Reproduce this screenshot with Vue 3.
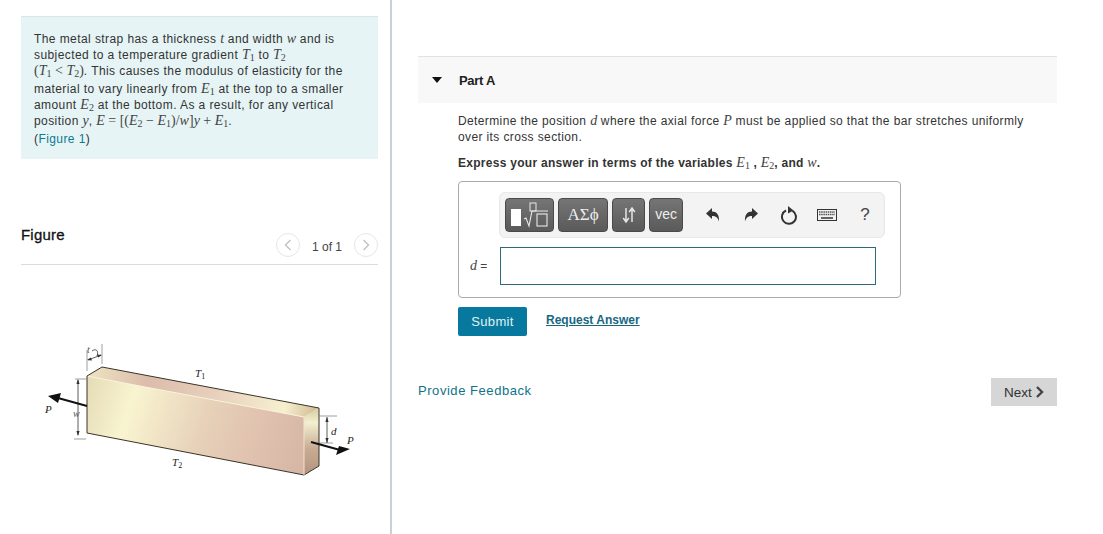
<script setup>
const toolIcons = ['undo', 'redo', 'reset', 'keyboard', 'help']
</script>

<template>
  <div class="page">
    <aside class="left">
      <section class="intro">
        <div class="ln l1">The metal strap has a thickness <i class="m">t</i> and width <i class="m">w</i> and is</div>
        <div class="ln l1">subjected to a temperature gradient <i class="m">T<sub>1</sub></i> to <i class="m">T<sub>2</sub></i></div>
        <div class="ln l2"><span class="m up">(<i>T<sub>1</sub></i> &lt; <i>T<sub>2</sub></i>)</span>. This causes the modulus of elasticity for the</div>
        <div class="ln l1">material to vary linearly from <i class="m">E<sub>1</sub></i> at the top to a smaller</div>
        <div class="ln l1">amount <i class="m">E<sub>2</sub></i> at the bottom. As a result, for any vertical</div>
        <div class="ln l2">position <i class="m">y</i>, <span class="m"><i>E</i> = [(<i>E<sub>2</sub></i> − <i>E<sub>1</sub></i>)/<i>w</i>]<i>y</i> + <i>E<sub>1</sub></i></span>.</div>
        <div class="ln"><span>(</span><a class="link">Figure 1</a><span>)</span></div>
      </section>

      <header class="fig-head">
        <h2>Figure</h2>
        <div class="pager">
          <span class="circle">
            <svg width="8" height="12" viewBox="0 0 8 12"><path d="M6.5 1 1.5 6l5 5" fill="none" stroke="#c4c4c4" stroke-width="1.5"/></svg>
          </span>
          <span class="count">1 of 1</span>
          <span class="circle">
            <svg width="8" height="12" viewBox="0 0 8 12"><path d="M1.5 1l5 5-5 5" fill="none" stroke="#c4c4c4" stroke-width="1.5"/></svg>
          </span>
        </div>
      </header>

      <svg class="figure" viewBox="21 266 357 230" width="357" height="230">
        <defs>
          <linearGradient id="front" gradientUnits="userSpaceOnUse" x1="87" y1="390" x2="304" y2="460">
            <stop offset="0" stop-color="#e6dcb8"/>
            <stop offset=".2" stop-color="#f9f4d0"/>
            <stop offset=".55" stop-color="#e6d0b8"/>
            <stop offset=".8" stop-color="#dfc0ae"/>
            <stop offset="1" stop-color="#d6b6a4"/>
          </linearGradient>
          <linearGradient id="top" gradientUnits="userSpaceOnUse" x1="90" y1="372" x2="319" y2="414">
            <stop offset="0" stop-color="#ece2c0"/>
            <stop offset=".25" stop-color="#dcbcab"/>
            <stop offset=".55" stop-color="#e8d0bd"/>
            <stop offset=".85" stop-color="#f6f0cf"/>
            <stop offset="1" stop-color="#cdb78f"/>
          </linearGradient>
          <linearGradient id="side" x1="0" y1="0" x2="0" y2="1">
            <stop offset="0" stop-color="#d8cc9e"/>
            <stop offset=".22" stop-color="#f3efd0"/>
            <stop offset=".6" stop-color="#c9ac94"/>
            <stop offset="1" stop-color="#b4937e"/>
          </linearGradient>
        </defs>
        <path d="M87 377 102 368 319 409 304 418Z" fill="url(#top)"/>
        <path d="M87 377 304 418V476L87 434Z" fill="url(#front)"/>
        <path d="M304 418 319 409V467L304 476Z" fill="url(#side)"/>
        <path d="M87 377 304 418" stroke="#f7f2dc" stroke-width="1" fill="none"/>
        <path d="M87 377 102 368 319 409V467L304 476 87 434Z" fill="none" stroke="#3a3328" stroke-width="1"/>
        <path d="M304 418V476" stroke="#eee4cc" stroke-width="1"/>

        <g fill="none" stroke="#777" stroke-width=".7">
          <path d="M87 372V351M102 365V345M75 380H86M74 440H86M319 417H337M318 444H333"/>
        </g>
        <g fill="none" stroke="#333" stroke-width=".8">
          <path d="M78 381V436M88 361 101 356M327 418V444M92 352C96 349 99 352 97 357"/>
        </g>
        <path d="M78 380l-1.6 5h3.2ZM78 437l-1.6-5h3.2ZM327 418l-1.6 5h3.2ZM327 444l-1.6-5h3.2ZM87 361l5 .5-1.2-3ZM102 356l-5-.5 1.2 3Z" fill="#333"/>

        <path d="M87 407 58 399" stroke="#111" stroke-width="2"/>
        <path d="M48 397 61 394 58 404Z" fill="#111"/>
        <path d="M311 443 340 451" stroke="#111" stroke-width="2"/>
        <path d="M350 450 336 456 339 447Z" fill="#111"/>

        <g class="lab">
          <text x="45" y="414">P</text>
          <text x="73" y="418" class="sm">w</text>
          <text x="347" y="445">P</text>
          <text x="331" y="436">d</text>
          <text x="87" y="354" class="sm">t</text>
          <text x="195" y="378">T<tspan class="sb" dy="2">1</tspan></text>
          <text x="172" y="467">T<tspan class="sb" dy="2">2</tspan></text>
        </g>
      </svg>
    </aside>

    <main class="right">
      <div class="part-head">
        <span class="tri"></span>
        <span class="part-title">Part A</span>
      </div>

      <div class="part-body">
        <p class="q">Determine the position <i class="m">d</i> where the axial force <i class="m">P</i> must be applied so that the bar stretches uniformly<br>over its cross section.</p>
        <p class="instr">Express your answer in terms of the variables <span class="m mn"><i>E<sub>1</sub></i></span> , <span class="m mn"><i>E<sub>2</sub></i></span>, and <i class="m mn">w</i>.</p>

        <div class="answer">
          <div class="toolbar">
            <button class="tb b1">
              <svg width="42" height="28" viewBox="0 0 42 28">
                <rect x="2" y="8" width="10" height="17" fill="#fff"/>
                <rect x="21" y="2" width="6" height="8" fill="none" stroke="#e8e8e8"/>
                <path d="M15 18l2-1 3 8 3-15h16" fill="none" stroke="#e8e8e8" stroke-width="1.1"/>
                <rect x="28" y="13" width="10" height="12" fill="none" stroke="#e8e8e8" stroke-width="1.1"/>
              </svg>
            </button>
            <button class="tb b2">ΑΣϕ</button>
            <button class="tb b3">
              <svg width="14" height="16" viewBox="0 0 14 16">
                <path d="M4 1V14M1.2 11 4 15 6.8 11" fill="none" stroke="#e6e6e6" stroke-width="1.5"/>
                <path d="M10 15V2M7.2 5 10 1 12.8 5" fill="none" stroke="#e6e6e6" stroke-width="1.5"/>
              </svg>
            </button>
            <button class="tb b4">vec</button>
            <div class="tools">
              <span v-for="t in toolIcons" :key="t" class="tool">
                <svg v-if="t === 'undo'" width="14" height="14" viewBox="0 0 14 14">
                  <path d="M0 5.5 6 0V3.4C10.5 3.4 13.5 6.4 13 13.5 11.8 9.5 10 8 6 8V11Z" fill="#333"/>
                </svg>
                <svg v-else-if="t === 'redo'" width="14" height="14" viewBox="0 0 14 14">
                  <path d="M14 5.5 8 0V3.4C3.500 3.4 .5 6.4 1 13.500 2.200 9.500 4 8 8 8V11Z" fill="#333"/>
                </svg>
                <svg v-else-if="t === 'reset'" width="18" height="20" viewBox="0 0 18 20">
                  <path d="M6 5.500A7 7 0 1 0 12.500 5.800" fill="none" stroke="#333" stroke-width="2"/>
                  <path d="M8 1 13.500 5.500 8 8.500Z" fill="#333"/>
                </svg>
                <svg v-else-if="t === 'keyboard'" width="20" height="12" viewBox="0 0 20 12">
                  <rect x=".5" y=".5" width="19" height="11" fill="#f2f2f2" stroke="#333"/>
                  <path d="M2 3h16M2 5.500h16" stroke="#555" stroke-width="1.300" stroke-dasharray="1.500 .7"/>
                  <path d="M4 9h12" stroke="#333" stroke-width="1.500"/>
                </svg>
                <span v-else class="help">?</span>
              </span>
            </div>
          </div>
          <div class="input-row">
            <label class="eq"><i class="m">d</i> =</label>
            <div class="input"></div>
          </div>
        </div>

        <div class="actions">
          <button class="submit">Submit</button>
          <a class="request">Request Answer</a>
        </div>
      </div>

      <div class="footer">
        <a class="feedback">Provide Feedback</a>
        <button class="next">Next
          <svg width="9" height="12" viewBox="0 0 9 12"><path d="M2 1l5 5-5 5" fill="none" stroke="#444" stroke-width="2.400"/></svg>
        </button>
      </div>
    </main>
  </div>
</template>

<style>
html, body { margin: 0; background: #fff; }
</style>

<style scoped>
.page {
  display: flex;
  width: 1103px;
  height: 534px;
  overflow: hidden;
  font-family: "Liberation Sans", Arial, sans-serif;
  font-size: 12px;
  color: #333;
}
.left {
  width: 390px;
  height: 534px;
  flex: none;
  box-sizing: content-box;
  border-right: 2px solid #c9d0d8;
  padding: 16px 0 0 21px;
  margin-top: 0;
  box-sizing: border-box;
  width: 392px;
}
.intro {
  width: 357px;
  height: 143px;
  box-sizing: border-box;
  background: #e6f4f6;
  border-top: 1px solid #d8e6e8;
  padding: 14px 0 0 13px;
  letter-spacing: .42px;
}
.ln { height: 16px; line-height: 16px; white-space: nowrap; }
.l2 { height: 18px; }
.m {
  font-family: "Liberation Serif", serif;
  font-size: 14px;
  letter-spacing: 0;
  color: #444;
}
sub { font-size: 10px; line-height: 0; font-style: normal; vertical-align: -2px; }
.link { color: #0b7a93; }
.fig-head {
  width: 357px;
  height: 48px;
  margin-top: 58px;
  display: flex;
  align-items: flex-start;
  justify-content: space-between;
  border-bottom: 1px solid #d9dcdf;
  box-sizing: content-box;
  height: 47px;
}
.fig-head h2 {
  margin: 9px 0 0;
  font-size: 15px;
  line-height: 18px;
  font-weight: 400;
  color: #111;
  -webkit-text-stroke: .3px #111;
  letter-spacing: .2px;
}
.pager { display: flex; align-items: center; margin-top: 16px; }
.circle {
  width: 24px;
  height: 24px;
  box-sizing: border-box;
  border: 1px solid #e6e6e6;
  border-radius: 50%;
  display: flex;
  align-items: center;
  justify-content: center;
}
.count { width: 54px; padding-top: 4px; text-align: center; color: #444; }
.figure { display: block; }
.lab text {
  font-family: "Liberation Serif", serif;
  font-style: italic;
  font-size: 11px;
  fill: #222;
}
.lab .sm { font-size: 10px; fill: #555; }
.lab .sb { font-size: 8px; font-style: normal; }

.right { flex: 1; padding: 56px 46px 0 26px; min-width: 0; }
.part-head {
  height: 46px;
  background: #f8f8f8;
  border-top: 1px solid #e2e2e2;
  display: flex;
  align-items: center;
}
.tri {
  width: 0; height: 0;
  margin-left: 14px;
  border-left: 5.500px solid transparent;
  border-right: 5.500px solid transparent;
  border-top: 6px solid #111;
}
.part-title {
  margin-left: 17px;
  font-size: 13px;
  font-weight: 700;
  letter-spacing: -.3px;
  color: #222;
}
.part-body { padding-left: 40px; }
.q {
  margin: 10px 0 0;
  line-height: 16px;
  letter-spacing: .38px;
  white-space: nowrap;
}
.instr {
  margin: 10px 0 0;
  line-height: 16px;
  font-weight: 700;
  letter-spacing: .28px;
  color: #333;
  white-space: nowrap;
}
.mn { font-weight: 400; }
.answer {
  width: 443px;
  height: 117px;
  margin-top: 10px;
  box-sizing: border-box;
  border: 1px solid #aaa;
  border-radius: 4px;
  padding: 10px 0 0 40px;
}
.toolbar {
  width: 386px;
  height: 46px;
  box-sizing: border-box;
  background: #f3f3f3;
  border: 1px solid #e8e8e8;
  border-radius: 6px;
  display: flex;
  align-items: center;
  padding-left: 5px;
  gap: 4px;
}
.tb {
  height: 34px;
  padding: 0;
  box-sizing: border-box;
  border: 1px solid #4a4a4a;
  border-radius: 4px;
  background: linear-gradient(#757575, #5a5a5a);
  color: #eee;
  display: flex;
  align-items: center;
  justify-content: center;
}
.b1, .b2 { width: 50px; }
.b3, .b4 { width: 34px; }
.b2 { font-family: "Liberation Serif", serif; font-size: 17px; }
.b4 { font-family: "Liberation Sans", sans-serif; font-size: 14px; padding-bottom: 3px; }
.tools { display: flex; align-items: center; margin-left: 7px; }
.tool { width: 38px; display: flex; justify-content: center; align-items: center; }
.help { font-size: 17px; color: #444; }
.input-row { display: flex; align-items: center; margin-top: 9px; margin-left: -29px; }
.eq { width: 30px; font-size: 12px; white-space: nowrap; color: #444; }
.input {
  width: 376px;
  height: 38px;
  box-sizing: border-box;
  border: 1px solid #2b6a7d;
  background: #fff;
}
.actions { display: flex; align-items: flex-start; margin-top: 9px; }
.submit {
  width: 69px;
  height: 29px;
  padding: 0;
  border: 0;
  border-radius: 2px;
  background: #07799e;
  color: #e2f1f5;
  font: 13px "Liberation Sans", sans-serif;
  letter-spacing: .3px;
}
.request {
  margin: 6px 0 0 19px;
  font-size: 12px;
  font-weight: 700;
  color: #17687f;
  text-decoration: underline;
}
.footer {
  display: flex;
  justify-content: space-between;
  align-items: flex-start;
  margin-top: 42px;
}
.feedback {
  margin-top: 5px;
  font-size: 13px;
  letter-spacing: .55px;
  color: #0e7389;
}
.next {
  width: 66px;
  height: 28px;
  padding: 0;
  border: 0;
  background: #d6d6d6;
  color: #333;
  font: 13.500px "Liberation Sans", sans-serif;
  display: flex;
  align-items: center;
  justify-content: center;
  gap: 3px;
}
</style>
